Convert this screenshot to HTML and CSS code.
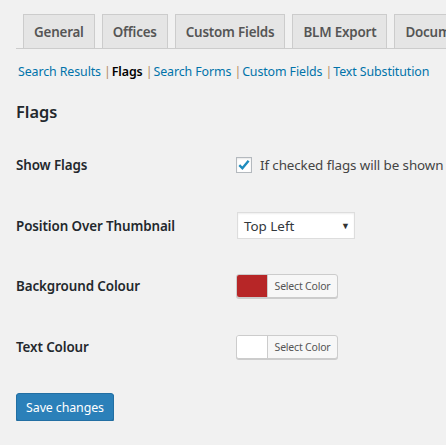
FILE: index.html
```html
<!DOCTYPE html>
<html>
<head>
<meta charset="utf-8">
<link rel="stylesheet" href="styles.css">
</head>
<body>
<div class="wrap">
  <nav class="tabs">
    <a class="tab">General</a>
    <a class="tab">Offices</a>
    <a class="tab">Custom Fields</a>
    <a class="tab">BLM Export</a>
    <a class="tab">Documents</a>
  </nav>
  <ul class="subnav">
    <li><a class="link">Search Results</a> <span class="sep">|</span></li>
    <li><a class="current">Flags</a> <span class="sep">|</span></li>
    <li><a class="link">Search Forms</a> <span class="sep">|</span></li>
    <li><a class="link">Custom Fields</a> <span class="sep">|</span></li>
    <li><a class="link">Text Substitution</a></li>
  </ul>
  <h2 class="title">Flags</h2>
  <div class="form">
    <div class="row">
      <div class="label">Show Flags</div>
      <div class="field">
        <label class="check">
          <span class="box"><svg width="14" height="14" viewBox="0 0 14 14"><path d="M2.3 7.2 L5.4 10.3 L11.6 2.8" fill="none" stroke="#1e8cbe" stroke-width="2.4"/></svg></span>
          <span>If checked flags will be shown</span>
        </label>
      </div>
    </div>
    <div class="row">
      <div class="label">Position Over Thumbnail</div>
      <div class="field">
        <div class="select"><span>Top Left</span><span class="arrow">▼</span></div>
      </div>
    </div>
    <div class="row">
      <div class="label">Background Colour</div>
      <div class="field">
        <div class="color"><span class="swatch red"></span><span class="ctext">Select Color</span></div>
      </div>
    </div>
    <div class="row">
      <div class="label">Text Colour</div>
      <div class="field">
        <div class="color"><span class="swatch white"></span><span class="ctext">Select Color</span></div>
      </div>
    </div>
  </div>
  <div class="submit"><button class="primary">Save changes</button></div>
</div>
</body>
</html>
```
FILE: styles.css
```css
html, body {
  margin: 0;
  padding: 0;
  background: #f1f1f1;
  overflow: hidden;
}
body {
  font-family: "Noto Sans", "Open Sans", sans-serif;
  color: #23282d;
  font-size: 13px;
}
.wrap {
  padding: 14px 0 0 16px;
}
.tabs {
  display: flex;
  white-space: nowrap;
  border-bottom: 1px solid #ccc;
  padding-left: 7px;
  gap: 7px;
  height: 34px;
  overflow: hidden;
}
.tab {
  flex: none;
  box-sizing: border-box;
  height: 35px;
  padding: 0 10px;
  border: 1px solid #ccc;
  border-bottom: none;
  background: #e5e5e5;
  color: #555;
  font-size: 13.4px;
  font-weight: 600;
  line-height: 34px;
  letter-spacing: -0.2px;
}
.subnav {
  list-style: none;
  margin: 9px 0 0 2px;
  padding: 0;
  display: flex;
  gap: 1px;
  font-size: 12.4px;
  line-height: 28px;
  white-space: nowrap;
  letter-spacing: -0.1px;
}
.subnav li { color: #a0a5aa; }
.link { color: #0073aa; }
.current { color: #000; font-weight: 600; }
.sep { color: #b58a5c; }
.title {
  margin: 14px 0 0 0;
  font-size: 16.4px;
  font-weight: 600;
  line-height: 24px;
  color: #23282d;
}
.form {
  margin-top: 11px;
}
.row {
  display: flex;
  align-items: center;
  height: 60.5px;
}
.label {
  width: 220px;
  flex: none;
  font-size: 13.4px;
  font-weight: 600;
  color: #23282d;
  letter-spacing: -0.1px;
}
.field {
  flex: 1;
  display: flex;
  align-items: center;
}
.check {
  display: flex;
  align-items: center;
  gap: 8px;
  font-size: 13.4px;
  color: #444;
  white-space: nowrap;
  letter-spacing: -0.1px;
}
.box {
  box-sizing: border-box;
  width: 16px;
  height: 16px;
  border: 1px solid #b4b9be;
  background: #fff;
  box-shadow: inset 0 1px 2px rgba(0,0,0,.1);
  display: flex;
  align-items: center;
  justify-content: center;
}
.select {
  box-sizing: border-box;
  margin-left: 1px;
  width: 118px;
  height: 27px;
  border: 1px solid #ddd;
  background: #fff;
  box-shadow: inset 0 1px 2px rgba(0,0,0,.07);
  display: flex;
  align-items: center;
  justify-content: space-between;
  padding: 0 4px 0 6px;
  font-size: 13.4px;
  color: #32373c;
}
.arrow {
  font-size: 9px;
  color: #333;
}
.color {
  box-sizing: border-box;
  width: 102px;
  height: 24px;
  border: 1px solid #ccc;
  border-radius: 3px;
  background: #f7f7f7;
  box-shadow: 0 1px 0 #ccc;
  display: flex;
  overflow: hidden;
}
.swatch {
  width: 30px;
  flex: none;
  border-right: 1px solid #ccc;
}
.red { background: #b72627; }
.white { background: #fff; }
.ctext {
  flex: 1;
  text-align: center;
  font-size: 10.5px;
  line-height: 22px;
  color: #555;
  letter-spacing: -0.2px;
}
.submit {
  margin-top: 16px;
}
.primary {
  box-sizing: border-box;
  width: 98px;
  height: 28px;
  background: #2b80b9;
  border: 1px solid #226fa3;
  border-radius: 3px;
  box-shadow: 0 1px 0 #1f6a9b;
  color: #fff;
  font-family: "Noto Sans", "Open Sans", sans-serif;
  font-size: 12.4px;
  padding: 0;
  letter-spacing: -0.1px;
}
```
